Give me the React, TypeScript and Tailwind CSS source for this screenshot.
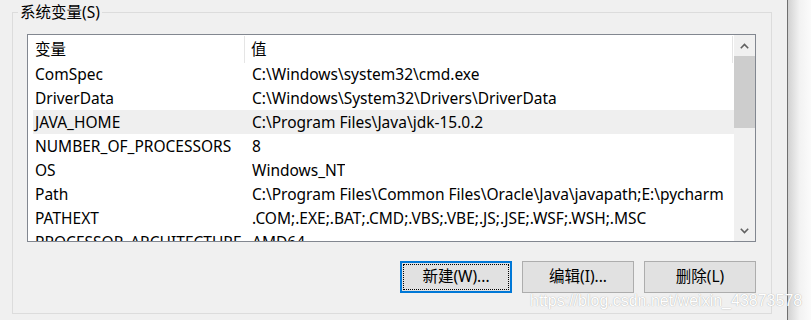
const ROWS: [string, string][] = [
  ['ComSpec', 'C:\\Windows\\system32\\cmd.exe'],
  ['DriverData', 'C:\\Windows\\System32\\Drivers\\DriverData'],
  ['JAVA_HOME', 'C:\\Program Files\\Java\\jdk-15.0.2'],
  ['NUMBER_OF_PROCESSORS', '8'],
  ['OS', 'Windows_NT'],
  ['Path', 'C:\\Program Files\\Common Files\\Oracle\\Java\\javapath;E:\\pycharm'],
  ['PATHEXT', '.COM;.EXE;.BAT;.CMD;.VBS;.VBE;.JS;.JSE;.WSF;.WSH;.MSC'],
  ['PROCESSOR_ARCHITECTURE', 'AMD64'],
];

function Chevron({ up }: { up?: boolean }) {
  return (
    <svg width="9" height="6" viewBox="0 0 9 6" className="block">
      <path
        d={up ? 'M0.8 5.2 L4.5 1.5 L8.2 5.2' : 'M0.8 0.8 L4.5 4.5 L8.2 0.8'}
        fill="none"
        stroke="#606060"
        strokeWidth="1.6"
      />
    </svg>
  );
}

function WinButton({ label, focused }: { label: string; focused?: boolean }) {
  if (focused) {
    return (
      <button
        type="button"
        className="w-[112px] h-[32px] border-2 border-[#0078d7] bg-[#e1e1e1] p-px"
      >
        <span className="flex h-full w-full items-center justify-center border border-dotted border-black">
          {label}
        </span>
      </button>
    );
  }
  return (
    <button
      type="button"
      className="w-[112px] h-[32px] border border-[#adadad] bg-[#e1e1e1] flex items-center justify-center"
    >
      {label}
    </button>
  );
}

export default function App() {
  return (
    <div className="w-[811px] h-[320px] bg-[#f0f0f0] flex overflow-hidden text-[15.5px] text-black font-['Noto_Sans','Noto_Sans_CJK_SC',sans-serif] relative">
      {/* dialog body */}
      <div className="w-[787px] h-full">
        <div className="relative mt-[12px] ml-[12px] w-[760px] h-[302px] border border-[#dcdcdc]">
          <span className="absolute -top-[10px] left-[5px] px-[2px] bg-[#f0f0f0] leading-[18px]">
            系统变量(S)
          </span>

          {/* list view */}
          <div className="mt-[21px] ml-[14px] w-[729px] h-[208px] border border-[#828790] bg-white flex overflow-hidden">
            <div className="w-[706px] h-full overflow-hidden">
              <div className="flex h-[27px] items-center">
                <div className="w-[217px] pl-[7px] pt-[2px] h-full flex items-center border-r border-[#e5e5e5] mt-px">变量</div>
                <div className="w-[488px] pl-[6px] pt-[2px] h-full flex items-center border-r border-[#e5e5e5] mt-px">值</div>
              </div>
              {ROWS.map(([name, value]) => (
                <div
                  key={name}
                  className={`ml-[5px] w-[701px] h-[24px] pt-[2px] flex items-center whitespace-nowrap ${
                    name === 'JAVA_HOME' ? 'bg-[#efefef]' : ''
                  }`}
                >
                  <div className="w-[219px] pl-[2px] overflow-hidden shrink-0">{name}</div>
                  <div className="overflow-hidden">{value}</div>
                </div>
              ))}
            </div>

            {/* scrollbar */}
            <div className="w-[21px] h-full bg-[#f0f0f0] flex flex-col">
              <div className="h-[21px] flex items-center justify-center">
                <Chevron up />
              </div>
              <div className="h-[72px] bg-[#cdcdcd]" />
              <div className="flex-1" />
              <div className="h-[21px] flex items-center justify-center">
                <Chevron />
              </div>
            </div>
          </div>

          <div className="mt-[19px] ml-[14px] w-[729px] flex justify-end gap-[10px]">
            <WinButton label="新建(W)..." focused />
            <WinButton label="编辑(I)..." />
            <WinButton label="删除(L)" />
          </div>
        </div>
      </div>

      {/* window edge + shadow */}
      <div className="w-px h-full bg-[#6f6f6f]" />
      <div className="flex-1 h-full bg-gradient-to-r from-[#d2d2d2] via-[#f2f2f2] to-[#fbfbfb]" />

      {/* watermark */}
      <span className="absolute left-[530px] top-[289px] text-[16px] text-white font-['Liberation_Sans',sans-serif] [text-shadow:0_0_1px_#999] pointer-events-none whitespace-nowrap">
        https://blog.csdn.net/weixin_43873578
      </span>
    </div>
  );
}
